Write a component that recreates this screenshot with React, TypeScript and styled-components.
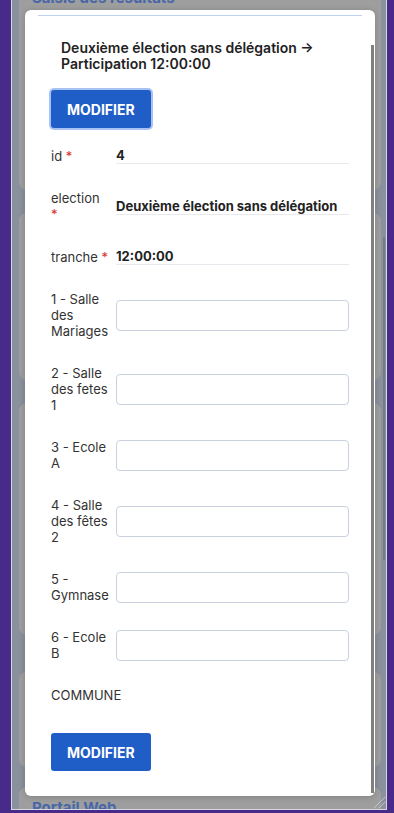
import React from 'react';
import styled, { createGlobalStyle } from 'styled-components';

const GlobalStyle = createGlobalStyle`
	html, body {
		margin: 0;
		padding: 0;
		height: 813px;
		overflow: hidden;
		background: #482a8b;
	}
	body {
		font-family: Inter, 'Noto Sans', sans-serif;
	}
`;

const Frame = styled.div`
	position: relative;
	margin-left: 11px;
	width: 376px;
	height: 810px;
	box-sizing: border-box;
	border: 1px solid #d6d6e4;
	border-top: none;
	background: #8a909c;
	overflow: hidden;
`;

const Backdrop = styled.div`
	display: flex;
	flex-direction: column;
	padding: 0 5px 0 7px;
	margin-top: -40px;
`;

const BackCard = styled.div<{ $h: number; $mt: number; $pt: number }>`
	height: ${(p) => p.$h}px;
	margin-top: ${(p) => p.$mt}px;
	padding: ${(p) => p.$pt}px 13px 0;
	box-sizing: border-box;
	background: #9e9e9e;
	border-radius: 8px;
	flex-shrink: 0;
`;

const BackTitle = styled.div`
	color: #4767a7;
	font-size: 15px;
	font-weight: 700;
	line-height: 18px;
`;

const PageScroll = styled.div`
	position: absolute;
	left: 371px;
	top: 237px;
	width: 2px;
	height: 323px;
	background: #767a83;
	border-radius: 1px;
`;

const Grip = styled.svg`
	position: absolute;
	right: 0;
	bottom: 0;
`;

const Modal = styled.div`
	position: absolute;
	left: 13px;
	top: 10px;
	width: 350px;
	height: 786px;
	background: #fff;
	border-radius: 6px;
	box-shadow: 0 1px 6px rgba(0, 0, 0, 0.18);
	overflow: hidden;
`;

const ModalThumb = styled.div`
	position: absolute;
	right: 1px;
	top: 35px;
	width: 3px;
	height: 748px;
	background: #808080;
`;

const ModalBody = styled.div`
	padding: 5px 26px 0;
	display: flex;
	flex-direction: column;
	align-items: flex-start;
`;

const Divider = styled.div`
	align-self: stretch;
	height: 1px;
	margin: 0 -13px;
	background: #bed3f3;
`;

const Title = styled.h2`
	margin: 24px 0 0 10px;
	font-size: 14px;
	line-height: 16px;
	font-weight: 600;
	color: #222;
`;

const Button = styled.button<{ $focus?: boolean; $mt: number }>`
	margin-top: ${(p) => p.$mt}px;
	height: 38px;
	padding: 0 16px;
	border: none;
	border-radius: 3px;
	background: #1f5ec6;
	color: #fff;
	font-family: Inter, 'Noto Sans', sans-serif;
	font-size: 14px;
	font-weight: 700;
	box-shadow: ${(p) => (p.$focus ? '0 0 0 2px #a7c2f3' : 'none')};
`;

const Form = styled.div`
	align-self: stretch;
	margin-top: 19px;
	display: flex;
	flex-direction: column;
	gap: 26px;
`;

const Row = styled.div`
	display: grid;
	grid-template-columns: 58px 1fr;
	column-gap: 7px;
	align-items: center;
`;

const Label = styled.div`
	font-size: 13px;
	line-height: 16px;
	color: #333;
`;

const Req = styled.span`
	color: #d4302c;
`;

const Value = styled.div`
	font-size: 13px;
	line-height: 16px;
	font-weight: 700;
	color: #222;
	border-bottom: 1px solid #e7e9ee;
`;

const Input = styled.input`
	height: 31px;
	width: 100%;
	box-sizing: border-box;
	border: 1px solid #c9d1de;
	border-radius: 4px;
	background: #fff;
`;

const readOnly = [
	{ label: 'id', value: '4' },
	{ label: 'election', value: 'Deuxième élection sans délégation' },
	{ label: 'tranche', value: '12:00:00' },
];

const places = [
	'1 - Salle des Mariages',
	'2 - Salle des fetes 1',
	'3 - Ecole A',
	'4 - Salle des fêtes 2',
	'5 - Gymnase',
	'6 - Ecole B',
];

const App = () => {
	return (
		<>
			<GlobalStyle />
			<Frame>
				<Backdrop>
					<BackCard $h={230} $mt={0} $pt={29}>
						<BackTitle>Saisie des résultats</BackTitle>
					</BackCard>
					<BackCard $h={167} $mt={23} $pt={0} />
					<BackCard $h={232} $mt={23} $pt={0} />
					<BackCard $h={95} $mt={37} $pt={0} />
					<BackCard $h={100} $mt={20} $pt={12}>
						<BackTitle>Portail Web</BackTitle>
					</BackCard>
				</Backdrop>
				<PageScroll />
				<Grip width="14" height="14" viewBox="0 0 14 14">
					<path d="M2 13 L13 2 M7 13 L13 7" stroke="#c4c4c8" strokeWidth="1" />
				</Grip>
				<Modal>
					<ModalBody>
						<Divider />
						<Title>
							Deuxième élection sans délégation → Participation 12:00:00
						</Title>
						<Button $focus $mt={18}>MODIFIER</Button>
						<Form>
							{readOnly.map((f) => (
								<Row key={f.label}>
									<Label>
										{f.label} <Req>*</Req>
									</Label>
									<Value>{f.value}</Value>
								</Row>
							))}
							{places.map((p) => (
								<Row key={p}>
									<Label>{p}</Label>
									<Input type="text" />
								</Row>
							))}
							<Row>
								<Label>COMMUNE</Label>
							</Row>
						</Form>
						<Button $mt={30}>MODIFIER</Button>
					</ModalBody>
					<ModalThumb />
				</Modal>
			</Frame>
		</>
	);
};

export default App;
